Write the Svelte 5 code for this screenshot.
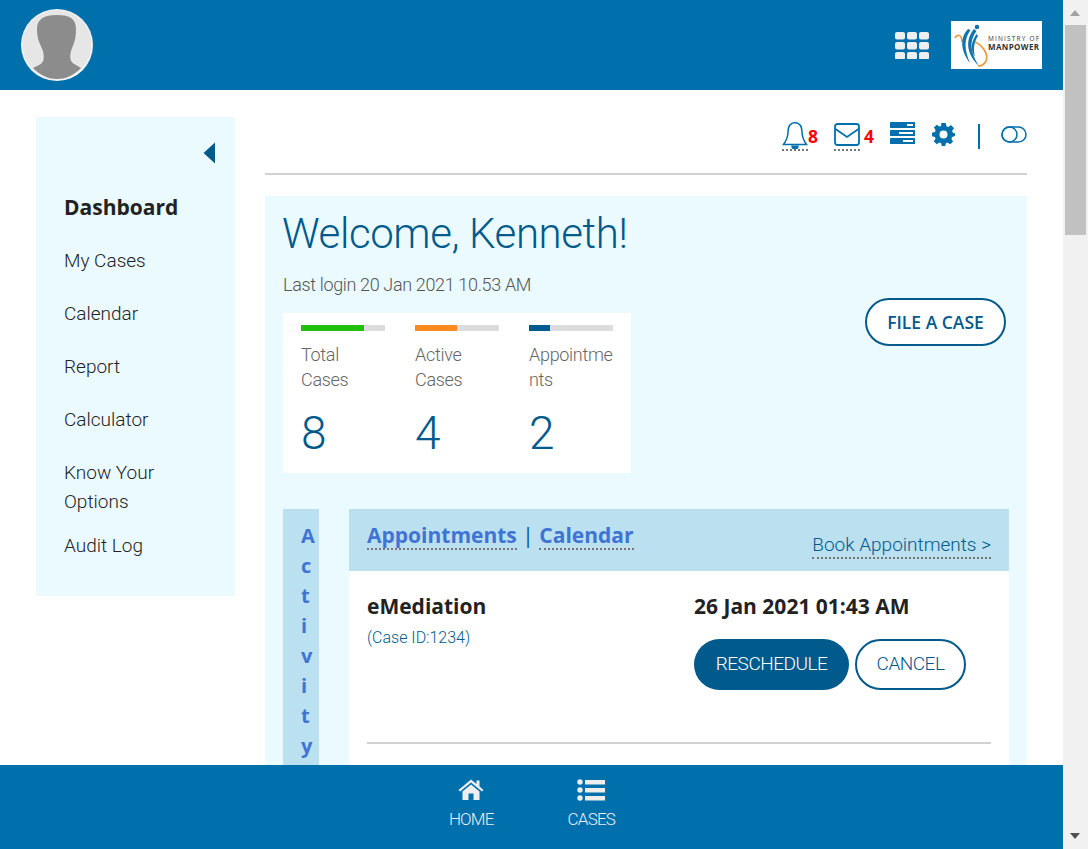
<script>
  const nav = ['My Cases', 'Calendar', 'Report', 'Calculator'];
  const stats = [
    { label: ['Total', 'Cases'], value: 8, pct: 75, color: '#1fbf0a' },
    { label: ['Active', 'Cases'], value: 4, pct: 50, color: '#ff8a1f' },
    { label: ['Appointments'], value: 2, pct: 25, color: '#005a8c' }
  ];
</script>

<div class="window">
  <div class="page">
    <header class="top">
      <svg class="avatar" viewBox="0 0 72 72" width="72" height="72">
        <circle cx="36" cy="36" r="36" fill="#f4f4f4" />
        <circle cx="36" cy="35.500" r="34.500" fill="#e6e6e6" />
        <path fill="#8c8c8c" d="M36 6C49 6 55 10 55 20C55 32 52 36 50 42C48.500 49 49 53 54 55.500L60 59C52 67 44 70 36 70C28 70 20 67 12 59L19 55.500C23 53 23.500 49 22 42C20 36 16 32 16 20C16 10 23 6 36 6Z" />
      </svg>
      <div class="top-right">
        <svg class="apps" viewBox="0 0 34 27" width="34" height="27" fill="#eeeeee">
          {#each [0, 10, 20] as y}
            {#each [0, 12, 24] as x}
              <rect x={x} y={y} width="10" height="7.500" rx="2" />
            {/each}
          {/each}
        </svg>
        <div class="logo">
          <svg viewBox="0 0 91 48" width="91" height="48">
            <path d="M4 17C6 13 11 13 11 21" fill="none" stroke="#f09a3e" stroke-width="1.800" />
            <path d="M17 8C10 15 8 28 19 42C13 28 13 18 19.500 9Z" fill="#1475ae" />
            <path d="M23 8C15 17 14 32 28 45C19 31 18 20 25.500 10Z" fill="#1475ae" />
            <path d="M25.500 13C20 21 19 29 24 36C22 28 23 21 27 15Z" fill="#1475ae" />
            <circle cx="26" cy="6" r="2.300" fill="#1475ae" />
            <path d="M24 21C31 24 38 33 35 40C33 44 30 45 27 45" fill="none" stroke="#f09a3e" stroke-width="1.700" />
            <text x="37" y="20" class="l1" textLength="51">MINISTRY OF</text>
            <text x="37" y="29" class="l2" textLength="51">MANPOWER</text>
          </svg>
        </div>
      </div>
    </header>

    <div class="content">
      <aside class="side">
        <div class="collapse">
          <svg viewBox="0 0 12 22" width="12" height="22"><path d="M12 0.500V21.500L0.500 11Z" fill="#005a8c" /></svg>
        </div>
        <a class="nav active" href="#d">Dashboard</a>
        {#each nav as n}
          <a class="nav" href="#n">{n}</a>
        {/each}
        <a class="nav two" href="#k">Know Your Options</a>
        <a class="nav last" href="#a">Audit Log</a>
      </aside>

      <main class="main">
        <div class="tools">
          <span class="tool dotted t-bell">
            <svg viewBox="0 0 26 30" width="26" height="30" fill="none" stroke="#0070ad" stroke-width="1.500">
              <path d="M13 1.500C8 2 6 6 6 11C6 17 4 20 1.500 23.500H24.500C22 20 20 17 20 11C20 6 18 2 13 1.500Z" />
              <path d="M10 24.500C10 29 16 29 16 24.500" fill="#0070ad" />
            </svg>
          </span>
          <b class="count c8">8</b>
          <span class="tool dotted t-mail">
            <svg viewBox="0 0 26 23" width="26" height="23" fill="none" stroke="#0070ad" stroke-width="1.800">
              <rect x="1" y="1" width="24" height="21" rx="2.500" />
              <path d="M1.500 6L13 14L24.500 6" />
            </svg>
          </span>
          <b class="count c4">4</b>
          <svg class="t-list" viewBox="0 0 25 22" width="25" height="22">
            <rect width="25" height="6" rx="0.500" fill="#0070ad" />
            <rect y="8" width="25" height="6" rx="0.500" fill="#0070ad" />
            <rect y="16" width="25" height="6" rx="0.500" fill="#0070ad" />
            <rect x="17" y="2" width="6" height="2" fill="#fff" />
            <rect x="9" y="10" width="14" height="2" fill="#fff" />
            <rect x="13" y="18" width="10" height="2" fill="#fff" />
          </svg>
          <svg class="t-gear" viewBox="0 0 24 24" width="23" height="23">
            <path fill="#0070ad" fill-rule="evenodd" d="M9.600 0H14.400L15 3.300L17 4.100L19.800 2.200L23 5.600L21 8.200L21.800 10.200L24 10.700V13.500L21 14.700L20.200 16.600L22 19.200L19 22.200L16.200 20.400L14.400 21L13.800 24H10.200L9.600 21L7.600 20.300L5 22.200L1.800 19L3.700 16.400L3 14.500L0 13.800V10.200L3 9.500L3.800 7.500L2 4.800L5 1.800L7.600 3.700L9.600 3ZM12 7.800A4.200 4.200 0 1 0 12 16.200A4.200 4.200 0 1 0 12 7.800Z" />
          </svg>
          <span class="t-sep"></span>
          <svg class="t-toggle" viewBox="0 0 26 17" width="26" height="17" fill="none" stroke="#0070ad" stroke-width="1.500">
            <rect x="1" y="1" width="24" height="15" rx="7.500" />
            <circle cx="8.500" cy="8.500" r="7.500" />
          </svg>
        </div>
        <div class="rule"></div>

        <section class="panel">
          <div class="hero">
            <div>
              <h1>Welcome, Kenneth!</h1>
              <p class="login">Last login 20 Jan 2021 10.53 AM</p>
              <div class="stats">
                {#each stats as s}
                  <div class="stat">
                    <div class="bar"><div class="fill" style="width:{s.pct}%;background:{s.color}"></div></div>
                    <div class="label">
                      {#each s.label as line}
                        <div>{line}</div>
                      {/each}
                    </div>
                    <div class="value">{s.value}</div>
                  </div>
                {/each}
              </div>
            </div>
            <button class="file">FILE A CASE</button>
          </div>

          <div class="activity">
            <div class="vert"><div class="vert-text">Activity</div></div>
            <div class="card">
              <div class="card-head">
                <div class="tabs">
                  <a class="tab" href="#ap">Appointments</a>
                  <span class="pipe">|</span>
                  <a class="tab" href="#ca">Calendar</a>
                </div>
                <a class="book" href="#b">Book Appointments &gt;</a>
              </div>
              <div class="card-body">
                <div class="row">
                  <div>
                    <div class="strong">eMediation</div>
                    <div class="case">(Case ID:1234)</div>
                  </div>
                  <div>
                    <div class="strong">26 Jan 2021 01:43 AM</div>
                    <div class="actions">
                      <button class="btn solid">RESCHEDULE</button>
                      <button class="btn ghost">CANCEL</button>
                    </div>
                  </div>
                </div>
                <div class="rule2"></div>
              </div>
            </div>
          </div>
        </section>
      </main>
    </div>

    <footer class="bottom">
      <a class="fitem" href="#h">
        <svg viewBox="0 0 26 22" width="26" height="22" fill="#eeeeee">
          <path d="M13 0.500L18.500 5V1.500H21.500V7.500L25.500 11L24 12.500L13 3.500L2 12.500L0.500 11Z" />
          <path d="M4.500 12.500L13 5.500L21.500 12.500V21H15.500V14.500H10.500V21H4.500Z" />
        </svg>
        <span>HOME</span>
      </a>
      <a class="fitem" href="#c">
        <svg viewBox="0 0 28 22" width="28" height="22" fill="#eeeeee">
          <circle cx="3" cy="3" r="2.700" /><circle cx="3" cy="11" r="2.700" /><circle cx="3" cy="19" r="2.700" />
          <rect x="8" y="1" width="20" height="4.500" /><rect x="8" y="9" width="20" height="4.500" /><rect x="8" y="17" width="20" height="4.500" />
        </svg>
        <span>CASES</span>
      </a>
    </footer>
  </div>

  <div class="scroll">
    <span class="arrow up"></span>
    <div class="thumb"></div>
    <span class="arrow down"></span>
  </div>
</div>

<style>
  :global(body) { margin: 0; overflow: hidden; }
  .window { display: flex; width: 1088px; height: 849px; overflow: hidden; font-family: Roboto, sans-serif; font-weight: 300; color: #333; }
  .page { width: 1063px; height: 849px; display: flex; flex-direction: column; background: #fff; }
  a { text-decoration: none; color: inherit; }

  .top { height: 90px; flex: none; background: #0070ad; display: flex; align-items: center; justify-content: space-between; padding: 0 21px; box-sizing: border-box; }
  .top-right { display: flex; align-items: center; gap: 22px; }
  .logo { width: 91px; height: 48px; background: #fff; display: block; }
  .logo svg { display: block; }
  .l1 { font: 400 6.500px "Open Sans", sans-serif; fill: #333; }
  .l2 { font: 700 8px "Open Sans", sans-serif; fill: #333; }

  .content { flex: 1; min-height: 0; overflow: hidden; display: flex; align-items: flex-start; padding: 27px 36px 0; gap: 30px; }
  .side { width: 199px; height: 479px; flex: none; background: #eafaff; box-sizing: border-box; padding: 25px 28px 0; display: flex; flex-direction: column; align-items: flex-start; }
  .collapse { align-self: flex-end; margin: 0 -8px 29px 0; height: 22px; }
  .collapse svg { display: block; }
  .nav { font-size: 19px; line-height: 29px; color: #222; margin-bottom: 24px; }
  .nav.active { font: 700 21px/29px "Open Sans", sans-serif; color: #222; }
  .nav.two { margin-bottom: 15px; width: 110px; }
  .nav.last { margin-bottom: 0; }

  .main { width: 762px; flex: none; }
  .tools { position: relative; height: 56px; }
  .tool { position: absolute; display: block; }
  .tool svg { display: block; }
  .dotted { border-bottom: 2px dotted #777; }
  .t-bell { left: 517px; top: 4px; height: 28px; overflow: hidden; }
  .t-mail { left: 569px; top: 6px; height: 26px; }
  .count { position: absolute; top: 9px; font: 700 17.500px/20px "Open Sans", sans-serif; color: #f00; }
  .c8 { left: 543px; }
  .c4 { left: 599px; }
  .t-list { position: absolute; left: 625px; top: 5px; }
  .t-gear { position: absolute; left: 667px; top: 6px; }
  .t-sep { position: absolute; left: 713px; top: 7px; width: 2px; height: 25px; background: #0070ad; }
  .t-toggle { position: absolute; left: 736px; top: 9px; }
  .rule { height: 2px; background: #d2d2d2; }

  .panel { margin-top: 21px; background: #eafaff; padding: 18px; height: 600px; box-sizing: border-box; }
  .hero { display: flex; justify-content: space-between; align-items: flex-start; }
  h1 { margin: 0 0 0 -1px; font-size: 42px; letter-spacing: -0.400px; line-height: 40px; font-weight: 300; color: #005a8c; }
  .login { margin: 19px 0 16px; font-size: 18px; letter-spacing: -0.350px; line-height: 24px; color: #555; }
  .stats { width: 348px; height: 160px; box-sizing: border-box; background: #fff; padding: 12px 18px; display: flex; gap: 30px; }
  .stat { width: 84px; }
  .bar { height: 6px; background: #dcdcdc; }
  .fill { height: 100%; }
  .label { margin-top: 11px; font-size: 18px; letter-spacing: -0.300px; line-height: 25px; color: #666; height: 50px; overflow-wrap: anywhere; }
  .value { margin-top: 16px; font-size: 46px; line-height: 50px; color: #005a8c; }
  .file { margin: 84px 3px 0 0; width: 141px; height: 48px; border-radius: 24px; border: 2px solid #005a8c; background: #fff; color: #005a8c; font: 600 17.500px "Open Sans", sans-serif; cursor: pointer; padding: 0; }

  .activity { margin-top: 36px; display: flex; gap: 30px; }
  .vert { width: 36px; height: 300px; flex: none; box-sizing: border-box; background: #bbe0f0; padding: 12px 0 0 18px; overflow: hidden; }
  .vert-text { width: 1px; font: 700 20px/30px "Open Sans", sans-serif; color: #3f74d4; word-break: break-all; }
  .card { width: 660px; background: #fff; height: 300px; }
  .card-head { height: 62px; background: #bbe0f0; box-sizing: border-box; padding: 0 18px; display: flex; justify-content: space-between; align-items: flex-start; }
  .tabs { display: flex; align-items: flex-start; gap: 5.500px; padding-top: 12px; font: 700 21px/28px "Open Sans", sans-serif; color: #3f74d4; }
  .tab { border-bottom: 2px dotted #777; height: 27px; }
  .pipe { font-weight: 400; color: #005a8c; }
  .book { margin-top: 23px; font-size: 19px; line-height: 25px; color: #005a8c; border-bottom: 2px dotted #777; }
  .card-body { padding: 21px 18px 0; }
  .row { display: grid; grid-template-columns: 327px 1fr; height: 150px; }
  .strong { font: 700 21px/28px "Open Sans", sans-serif; color: #222; }
  .case { margin-top: 8px; font-size: 16px; line-height: 20px; color: #005a8c; }
  .actions { display: flex; gap: 6px; margin-top: 19px; }
  .btn { height: 51px; border-radius: 26px; font: 300 19px Roboto, sans-serif; letter-spacing: -0.500px; padding: 0 0 2px; cursor: pointer; }
  .solid { width: 155px; background: #005a8c; color: #fff; border: none; }
  .ghost { width: 111px; background: #fff; color: #005a8c; border: 2px solid #005a8c; }
  .rule2 { height: 2px; background: #d2d2d2; }

  .bottom { height: 84px; flex: none; background: #0070ad; position: relative; z-index: 1; display: flex; justify-content: center; gap: 74px; padding: 14px 0 0 1px; box-sizing: border-box; }
  .fitem { display: flex; flex-direction: column; align-items: center; gap: 8px; color: #eee; font-size: 17px; letter-spacing: -0.800px; line-height: 20px; }
  .fitem svg { display: block; }

  .scroll { width: 25px; height: 849px; flex: none; background: #f1f1f1; position: relative; box-sizing: border-box; padding: 25px 2px 0; }
  .thumb { height: 210px; background: #c1c1c1; }
  .arrow { position: absolute; left: 7px; width: 0; height: 0; border-left: 5.500px solid transparent; border-right: 5.500px solid transparent; }
  .up { top: 10px; border-bottom: 6px solid #a3a3a3; }
  .down { bottom: 10px; border-top: 6px solid #505050; }
</style>
